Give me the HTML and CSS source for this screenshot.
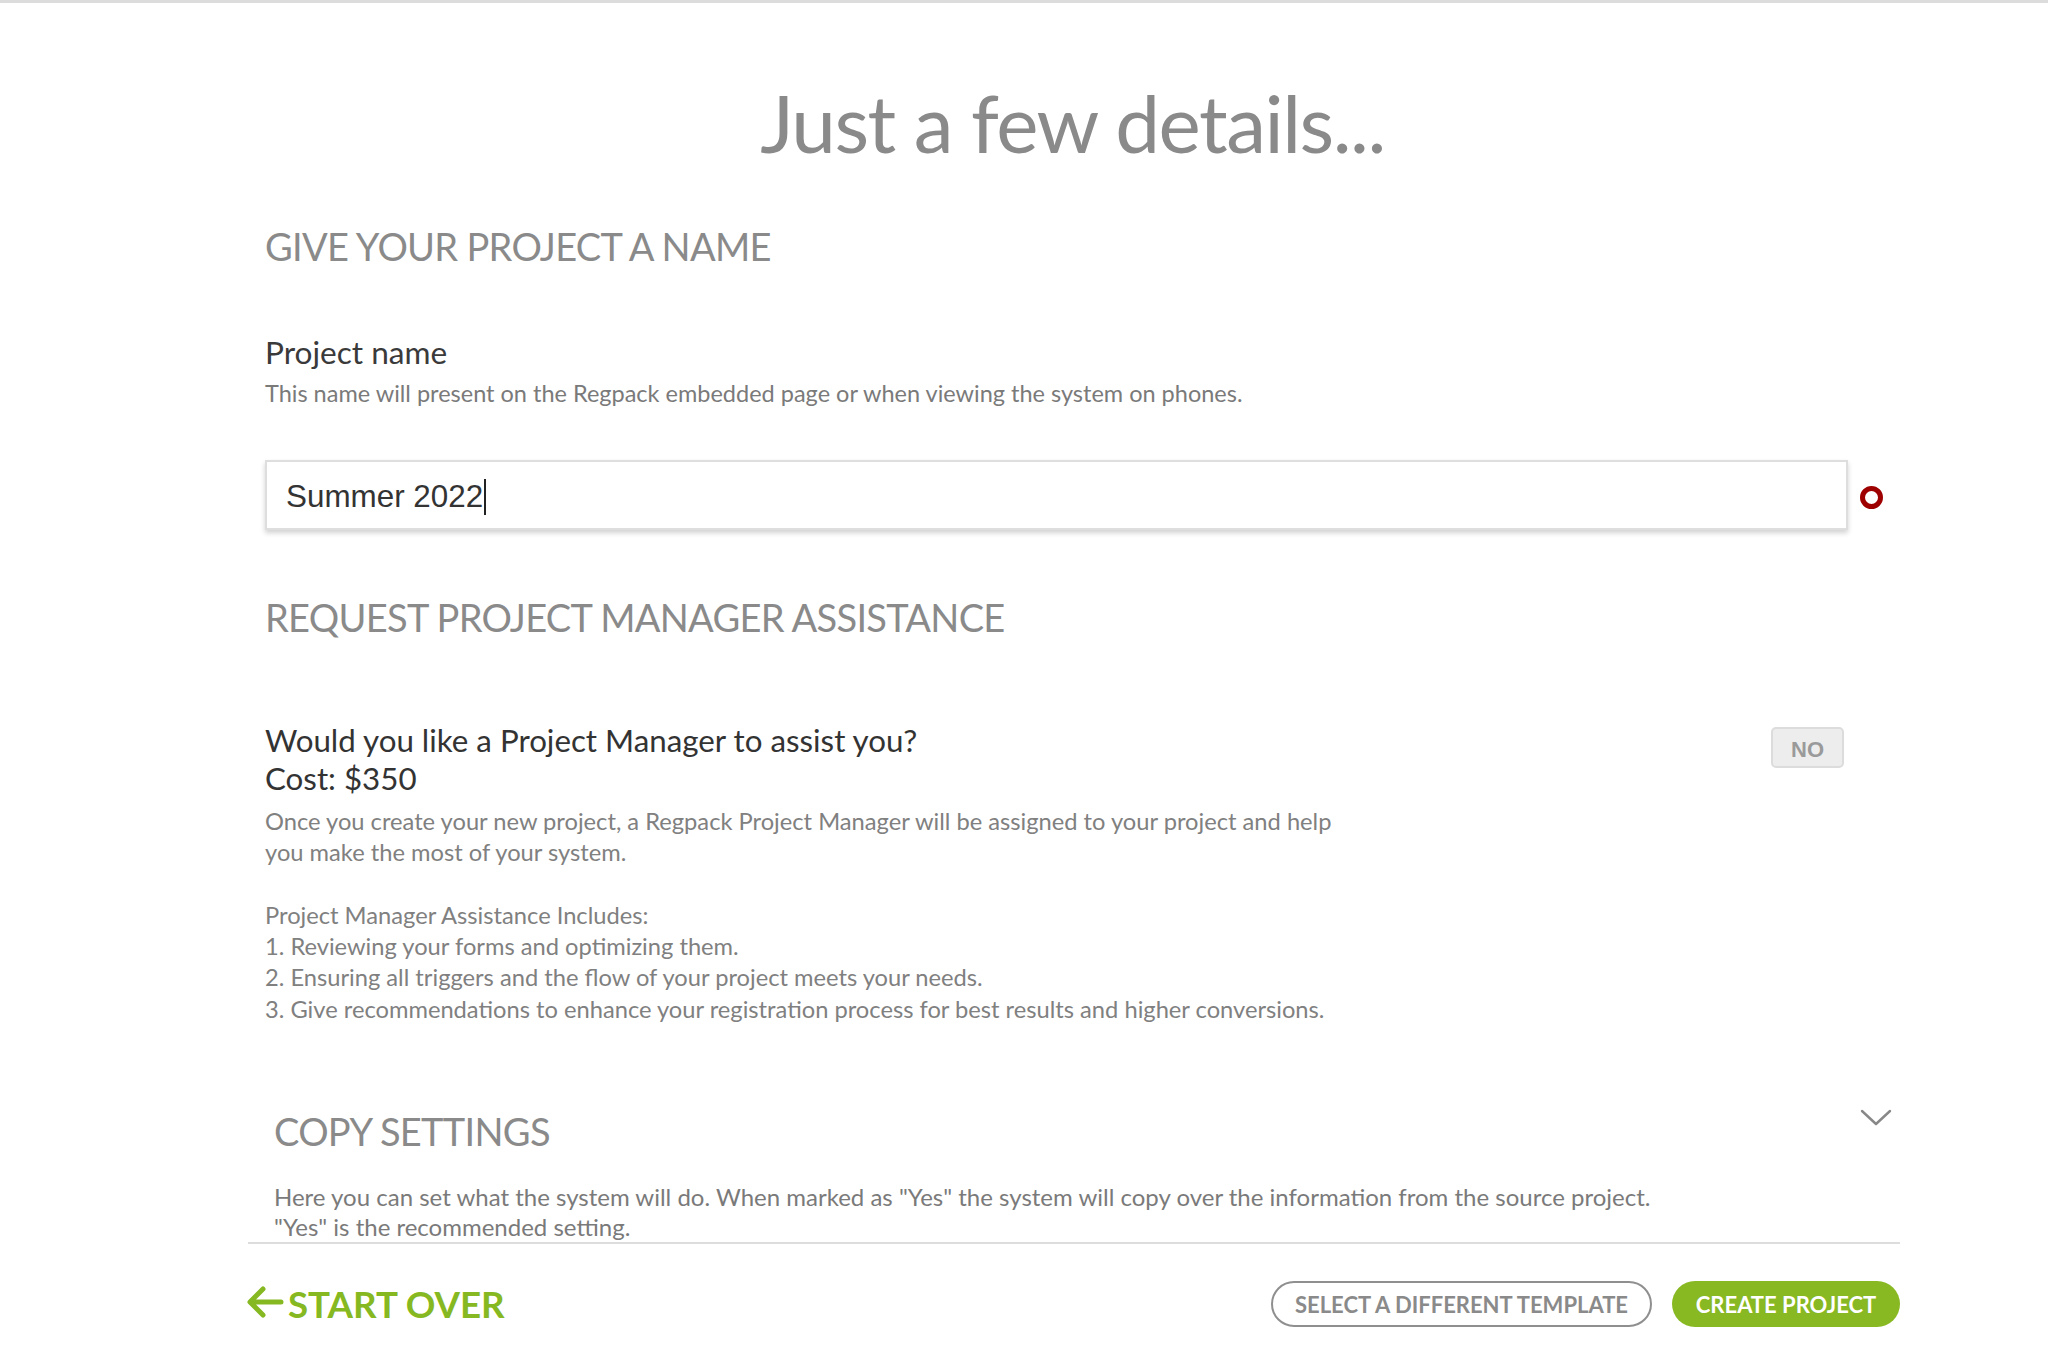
FILE: index.html
```html
<!DOCTYPE html>
<html>
<head>
<meta charset="utf-8">
<link rel="stylesheet" href="styles.css">
</head>
<body>
<div class="page">
  <h1 class="title">Just a few details...</h1>
  <section class="main">
    <h2 class="section-title first">GIVE YOUR PROJECT A NAME</h2>
    <div class="field-label">Project name</div>
    <div class="field-desc">This name will present on the Regpack embedded page or when viewing the system on phones.</div>
    <div class="input-row">
      <div class="text-input">Summer 2022<span class="caret"></span></div>
      <span class="required-dot"></span>
    </div>

    <h2 class="section-title second">REQUEST PROJECT MANAGER ASSISTANCE</h2>
    <div class="question-row">
      <div class="question-text">
        <div class="question">Would you like a Project Manager to assist you?<br>Cost: $350</div>
        <p class="question-desc">Once you create your new project, a Regpack Project Manager will be assigned to your project and help<br>you make the most of your system.<br><br>Project Manager Assistance Includes:<br>1. Reviewing your forms and optimizing them.<br>2. Ensuring all triggers and the flow of your project meets your needs.<br>3. Give recommendations to enhance your registration process for best results and higher conversions.</p>
      </div>
      <button class="toggle-no">NO</button>
    </div>
  </section>

  <section class="copy-settings">
    <div class="copy-head">
      <h2 class="section-title copy-title">COPY SETTINGS</h2>
      <svg class="chevron" width="32" height="18" viewBox="0 0 32 18"><path d="M2 2 L16 15 L30 2" fill="none" stroke="#888" stroke-width="2.4" stroke-linecap="round" stroke-linejoin="round"/></svg>
    </div>
    <p class="copy-desc">Here you can set what the system will do. When marked as "Yes" the system will copy over the information from the source project.<br>"Yes" is the recommended setting.</p>
  </section>

  <footer class="footer">
    <a class="start-over">
      <svg class="back-arrow" width="38" height="34" viewBox="0 0 38 34"><path d="M35 17 H5 M17 4 L4 17 L17 30" fill="none" stroke="#86b821" stroke-width="5" stroke-linecap="round" stroke-linejoin="round"/></svg>
      <span>START OVER</span>
    </a>
    <div class="footer-buttons">
      <button class="btn btn-outline">SELECT A DIFFERENT TEMPLATE</button>
      <button class="btn btn-green">CREATE PROJECT</button>
    </div>
  </footer>
</div>
</body>
</html>
```

FILE: styles.css
```css
* { box-sizing: border-box; }
html, body { margin: 0; padding: 0; background: #fff; }
body {
  font-family: Lato, "Open Sans", "Liberation Sans", sans-serif;
  border-top: 3px solid #dcdcdc;
  height: 1359px;
  overflow: hidden;
}
.page {
  width: 2048px;
  height: 1356px;
  border-bottom: 3px solid #8a8a8a;
}
.title {
  margin: 70px 0 0 265px;
  width: 1615px;
  text-align: center;
  font-size: 80px;
  line-height: 98px;
  letter-spacing: -1.5px;
  font-weight: 400;
  color: #8a8a8a;
}
.main {
  margin-left: 265px;
  width: 1583px;
}
.section-title {
  margin: 0;
  font-size: 38px;
  line-height: 46px;
  letter-spacing: -0.7px;
  font-weight: 400;
  color: #8a8a8a;
}
.section-title.first { margin-top: 52px; }
.section-title.second { margin-top: 64px; }
.field-label {
  margin-top: 65px;
  font-size: 31.6px;
  line-height: 36px;
  color: #3a3a3a;
}
.field-desc {
  margin-top: 8px;
  font-size: 23.5px;
  line-height: 30px;
  color: #7a7a7a;
}
.input-row {
  margin-top: 52px;
  display: flex;
  align-items: center;
  width: 1640px;
}
.text-input {
  width: 1583px;
  height: 70px;
  border: 2px solid #dedede;
  box-shadow: 0 3px 5px rgba(0,0,0,0.18);
  padding-left: 19px;
  display: flex;
  align-items: center;
  font-family: "Liberation Sans", Arial, sans-serif;
  font-size: 31.4px;
  color: #333;
  padding-top: 3px;
}
.caret {
  display: inline-block;
  width: 2px;
  height: 36px;
  background: #222;
  margin-left: 1px;
}
.required-dot {
  margin-left: 12px;
  margin-top: 4px;
  width: 23px;
  height: 23px;
  border: 5px solid #9e0000;
  border-radius: 50%;
}
.question-row {
  display: flex;
  justify-content: space-between;
  align-items: flex-start;
  margin-top: 81px;
}
.question {
  font-size: 31.3px;
  line-height: 38px;
  color: #333;
}
.question-desc {
  margin: 9px 0 0;
  font-size: 23.7px;
  line-height: 31.3px;
  color: #808080;
}
.toggle-no {
  margin-top: 6px;
  margin-right: 4px;
  width: 73px;
  height: 41px;
  background: #ededed;
  border: 2px solid #dcdcdc;
  border-radius: 5px;
  font-family: "Liberation Sans", Arial, sans-serif;
  font-weight: 700;
  font-size: 22px;
  color: #9a9a9a;
  padding: 4px 0 0;
}
.copy-settings {
  margin-left: 248px;
  width: 1652px;
  margin-top: 83px;
  padding-left: 26px;
  border-bottom: 2px solid #dddddd;
}
.copy-head {
  display: flex;
  justify-content: space-between;
  align-items: flex-start;
}
.chevron {
  margin-top: 1px;
  margin-right: 8px;
}
.copy-desc {
  margin: 28px 0 0;
  font-size: 24px;
  line-height: 30px;
  color: #7a7a7a;
}
.footer {
  margin-left: 246px;
  width: 1654px;
  margin-top: 37px;
  display: flex;
  justify-content: space-between;
  align-items: center;
}
.start-over {
  display: flex;
  align-items: center;
  gap: 4px;
  color: #86b821;
  font-weight: 700;
  font-size: 36.7px;
  line-height: 46px;
}
.back-arrow { margin-top: -4px; }
.footer-buttons {
  display: flex;
  gap: 20px;
}
.btn {
  height: 46px;
  border-radius: 23px;
  font-family: Lato, "Liberation Sans", sans-serif;
  font-weight: 700;
  font-size: 22px;
  padding: 0;
}
.btn-outline {
  width: 381px;
  background: #fff;
  border: 2px solid #8f8f8f;
  color: #8a8a8a;
}
.btn-green {
  width: 228px;
  background: #88b822;
  border: none;
  color: #fff;
}
```
